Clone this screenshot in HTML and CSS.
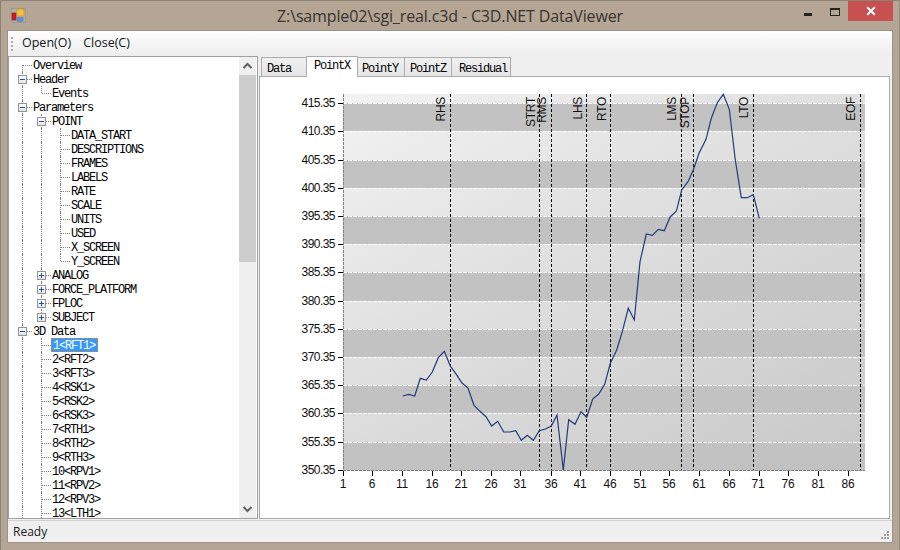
FILE: index.html
```html
<!DOCTYPE html>
<html lang="en">
<head>
<meta charset="utf-8">
<title>C3D.NET DataViewer</title>
<link rel="stylesheet" href="styles.css">
</head>
<body>
<div class="window">
  <header class="titlebar">
    <svg class="appicon" width="15" height="15" viewBox="0 0 15 15">
      <rect x="0.5" y="0.5" width="14" height="14" fill="#b9aca0" stroke="#a09a94"/>
      <rect x="1" y="5" width="4" height="7" fill="#c81e1e" stroke="#8a2020" stroke-width="0.6"/>
      <rect x="6" y="1" width="7" height="7" fill="#f0c040" stroke="#c09020" stroke-width="0.6"/>
      <rect x="6" y="9.5" width="6" height="4" fill="#5b8fd8" stroke="#6080b0" stroke-width="0.6"/>
    </svg>
    <div class="title">Z:\sample02\sgi_real.c3d - C3D.NET DataViewer</div>
    <div class="controls">
      <span class="btn"><i class="min"></i></span>
      <span class="btn"><i class="max"></i></span>
      <span class="close">
        <svg width="10" height="10" viewBox="0 0 10 10"><path d="M1.2 1.2 8.8 8.8M8.8 1.2 1.2 8.8" stroke="#fff" stroke-width="2"/></svg>
      </span>
    </div>
  </header>
  <div class="client">
    <nav class="toolbar">
      <span class="grip"></span>
      <span class="menu">Open(O)</span>
      <span class="menu">Close(C)</span>
    </nav>
    <main class="main">
      <section class="tree">
        <div class="nodes">
          <div class="row"><i class="cell start"></i><span class="label">Overview</span></div>
          <div class="row"><i class="cell tee"><b class="exp open"></b></i><span class="label">Header</span></div>
          <div class="row"><i class="cell v"></i><i class="cell corner"></i><span class="label">Events</span></div>
          <div class="row"><i class="cell tee"><b class="exp open"></b></i><span class="label">Parameters</span></div>
          <div class="row"><i class="cell v"></i><i class="cell tee"><b class="exp open"></b></i><span class="label">POINT</span></div>
          <div class="row"><i class="cell v"></i><i class="cell v"></i><i class="cell tee"></i><span class="label">DATA_START</span></div>
          <div class="row"><i class="cell v"></i><i class="cell v"></i><i class="cell tee"></i><span class="label">DESCRIPTIONS</span></div>
          <div class="row"><i class="cell v"></i><i class="cell v"></i><i class="cell tee"></i><span class="label">FRAMES</span></div>
          <div class="row"><i class="cell v"></i><i class="cell v"></i><i class="cell tee"></i><span class="label">LABELS</span></div>
          <div class="row"><i class="cell v"></i><i class="cell v"></i><i class="cell tee"></i><span class="label">RATE</span></div>
          <div class="row"><i class="cell v"></i><i class="cell v"></i><i class="cell tee"></i><span class="label">SCALE</span></div>
          <div class="row"><i class="cell v"></i><i class="cell v"></i><i class="cell tee"></i><span class="label">UNITS</span></div>
          <div class="row"><i class="cell v"></i><i class="cell v"></i><i class="cell tee"></i><span class="label">USED</span></div>
          <div class="row"><i class="cell v"></i><i class="cell v"></i><i class="cell tee"></i><span class="label">X_SCREEN</span></div>
          <div class="row"><i class="cell v"></i><i class="cell v"></i><i class="cell corner"></i><span class="label">Y_SCREEN</span></div>
          <div class="row"><i class="cell v"></i><i class="cell tee"><b class="exp"></b></i><span class="label">ANALOG</span></div>
          <div class="row"><i class="cell v"></i><i class="cell tee"><b class="exp"></b></i><span class="label">FORCE_PLATFORM</span></div>
          <div class="row"><i class="cell v"></i><i class="cell tee"><b class="exp"></b></i><span class="label">FPLOC</span></div>
          <div class="row"><i class="cell v"></i><i class="cell corner"><b class="exp"></b></i><span class="label">SUBJECT</span></div>
          <div class="row"><i class="cell tee"><b class="exp open"></b></i><span class="label">3D Data</span></div>
          <div class="row"><i class="cell v"></i><i class="cell tee"></i><span class="label selected">1&lt;RFT1&gt;</span></div>
          <div class="row"><i class="cell v"></i><i class="cell tee"></i><span class="label">2&lt;RFT2&gt;</span></div>
          <div class="row"><i class="cell v"></i><i class="cell tee"></i><span class="label">3&lt;RFT3&gt;</span></div>
          <div class="row"><i class="cell v"></i><i class="cell tee"></i><span class="label">4&lt;RSK1&gt;</span></div>
          <div class="row"><i class="cell v"></i><i class="cell tee"></i><span class="label">5&lt;RSK2&gt;</span></div>
          <div class="row"><i class="cell v"></i><i class="cell tee"></i><span class="label">6&lt;RSK3&gt;</span></div>
          <div class="row"><i class="cell v"></i><i class="cell tee"></i><span class="label">7&lt;RTH1&gt;</span></div>
          <div class="row"><i class="cell v"></i><i class="cell tee"></i><span class="label">8&lt;RTH2&gt;</span></div>
          <div class="row"><i class="cell v"></i><i class="cell tee"></i><span class="label">9&lt;RTH3&gt;</span></div>
          <div class="row"><i class="cell v"></i><i class="cell tee"></i><span class="label">10&lt;RPV1&gt;</span></div>
          <div class="row"><i class="cell v"></i><i class="cell tee"></i><span class="label">11&lt;RPV2&gt;</span></div>
          <div class="row"><i class="cell v"></i><i class="cell tee"></i><span class="label">12&lt;RPV3&gt;</span></div>
          <div class="row"><i class="cell v"></i><i class="cell tee"></i><span class="label">13&lt;LTH1&gt;</span></div>
        </div>
        <div class="scrollbar">
          <svg class="arrow" width="17" height="18" viewBox="0 0 17 18"><path d="M4.5 11 8.5 7 12.5 11" fill="none" stroke="#606060" stroke-width="2"/></svg>
          <div class="thumb"></div>
          <div class="track"></div>
          <svg class="arrow" width="17" height="18" viewBox="0 0 17 18"><path d="M4.5 7 8.5 11 12.5 7" fill="none" stroke="#606060" stroke-width="2"/></svg>
        </div>
      </section>
      <section class="tabs">
        <div class="tabstrip">
          <span class="tab tab-data">Data</span>
          <span class="tab active">PointX</span>
          <span class="tab tab-y">PointY</span>
          <span class="tab tab-z">PointZ</span>
          <span class="tab tab-r">Residual</span>
        </div>
        <div class="page">
          <svg class="chart" width="629" height="441" viewBox="260 77 629 441">
            <defs>
              <linearGradient id="plotbg" gradientUnits="userSpaceOnUse" x1="343" y1="94" x2="740" y2="782">
                <stop offset="0" stop-color="#f2f2f2"/>
                <stop offset="1" stop-color="#b8b8b8"/>
              </linearGradient>
            </defs>
            <rect x="343" y="94" width="522" height="377" fill="url(#plotbg)"/>
            <g class="band">
              <rect x="343" y="103" width="522" height="28"/>
              <rect x="343" y="160" width="522" height="28"/>
              <rect x="343" y="216" width="522" height="28"/>
              <rect x="343" y="272" width="522" height="29"/>
              <rect x="343" y="329" width="522" height="28"/>
              <rect x="343" y="385" width="522" height="28"/>
              <rect x="343" y="442" width="522" height="28"/>
            </g>
            <path class="grid" d="M343 103.5H865M343 131.5H865M343 160.5H865M343 188.5H865M343 216.5H865M343 244.5H865M343 272.5H865M343 301.5H865M343 329.5H865M343 357.5H865M343 385.5H865M343 413.5H865M343 442.5H865"/>
            <path class="axisline" d="M343.5 94V470.5H865"/>
            <path class="tick" d="M338 103.5H343M338 131.5H343M338 160.5H343M338 188.5H343M338 216.5H343M338 244.5H343M338 272.5H343M338 301.5H343M338 329.5H343M338 357.5H343M338 385.5H343M338 413.5H343M338 442.5H343M338 470.5H343"/>
            <path class="tick" d="M343.5 471V476M372.5 471V476M402.5 471V476M432.5 471V476M461.5 471V476M491.5 471V476M520.5 471V476M551.5 471V476M580.5 471V476M610.5 471V476M640.5 471V476M669.5 471V476M699.5 471V476M729.5 471V476M759.5 471V476M788.5 471V476M818.5 471V476M848.5 471V476"/>
            <path class="event" d="M450.5 94V470M539.5 94V470M551.5 94V470M586.5 94V470M610.5 94V470M681.5 94V470M693.5 94V470M753.5 94V470M860.5 94V470"/>
            <g class="ylabels">
              <text x="335" y="107">415.35</text><text x="335" y="135">410.35</text><text x="335" y="164">405.35</text><text x="335" y="192">400.35</text><text x="335" y="220">395.35</text><text x="335" y="248">390.35</text><text x="335" y="276">385.35</text><text x="335" y="305">380.35</text><text x="335" y="333">375.35</text><text x="335" y="361">370.35</text><text x="335" y="389">365.35</text><text x="335" y="417">360.35</text><text x="335" y="446">355.35</text><text x="335" y="474">350.35</text>
            </g>
            <g class="xlabels">
              <text x="343" y="488">1</text><text x="372" y="488">6</text><text x="402" y="488">11</text><text x="432" y="488">16</text><text x="461" y="488">21</text><text x="491" y="488">26</text><text x="520" y="488">31</text><text x="551" y="488">36</text><text x="580" y="488">41</text><text x="610" y="488">46</text><text x="640" y="488">51</text><text x="669" y="488">56</text><text x="699" y="488">61</text><text x="729" y="488">66</text><text x="758" y="488">71</text><text x="788" y="488">76</text><text x="818" y="488">81</text><text x="848" y="488">86</text>
            </g>
            <g class="elabels">
              <text transform="translate(445 97) rotate(-90)">RHS</text>
              <text transform="translate(535 97) rotate(-90)">STRT</text>
              <text transform="translate(546 97) rotate(-90)">RMS</text>
              <text transform="translate(582 97) rotate(-90)">LHS</text>
              <text transform="translate(606 97) rotate(-90)">RTO</text>
              <text transform="translate(676 97) rotate(-90)">LMS</text>
              <text transform="translate(689 97) rotate(-90)">STOP</text>
              <text transform="translate(748 97) rotate(-90)">LTO</text>
              <text transform="translate(855 97) rotate(-90)">EOF</text>
            </g>
            <polyline class="series" points="402.7,396 408.7,394.3 414.7,396 420.3,378.3 426.3,380 432.3,372 438.3,357.7 444.3,351.3 450.3,366 456.3,374.3 462,383 468,388 474,405.3 480,411.3 486,416.7 491.7,426 497.7,421.3 503.7,432 509.7,432 515.7,430.7 521.3,440.3 527.3,435.3 533.3,440.3 539.3,430.7 545.3,429 551.3,426 557,415 563.3,470 568.7,419.7 575,424.3 581,411.7 586.7,417.3 592.7,399 598.7,394 604.7,384.3 610.3,363.3 616.7,350 622.3,331.7 628.3,308.3 634.3,320 640,261.7 646.3,234 652.3,235.3 658.3,229.3 664.3,230.7 670.3,216.7 676.3,211.3 681.7,190 688,181.7 693.3,170 699,153.3 706,139.3 711.3,118.3 717.3,102.7 723.3,94.3 729.3,109.3 735.3,160 741.3,197.7 747.3,197.7 753.3,194.7 759.3,218.3"/>
          </svg>
        </div>
      </section>
    </main>
    <footer class="status">
      <span>Ready</span>
      <svg class="sizegrip" width="11" height="11" viewBox="0 0 11 11">
        <path d="M8 1h2v2H8zM5 4h2v2H5zM8 4h2v2H8zM2 7h2v2H2zM5 7h2v2H5zM8 7h2v2H8z" fill="#a0a0a0"/>
      </svg>
    </footer>
  </div>
</div>
</body>
</html>
```

FILE: styles.css
```css
* { box-sizing: border-box; }
html, body { margin: 0; padding: 0; }
body { width: 900px; height: 550px; overflow: hidden; }

.window {
  width: 900px;
  height: 550px;
  display: flex;
  flex-direction: column;
  background: #b5a594;
  border-top: 1px solid #8c8276;
  border-left: 1px solid #8c8276;
  border-right: 1px solid #9a8e80;
  padding: 0 7px 8px 7px;
}

.titlebar {
  height: 30px;
  flex: none;
  display: flex;
  align-items: flex-start;
  position: relative;
}
.appicon { margin: 7px 0 0 3px; flex: none; }
.title {
  position: absolute;
  left: 0;
  right: 0;
  top: 5px;
  text-align: center;
  font: 16px/20px "Open Sans", "Noto Sans", sans-serif;
  letter-spacing: -0.14px;
  color: #38332e;
}
.controls { margin-left: auto; display: flex; position: relative; margin-right: -1px; }
.btn { width: 26px; height: 20px; display: flex; justify-content: center; }
.min { width: 8px; height: 3px; background: #26221e; margin: 12px 0 0 6px; }
.max { width: 10px; height: 8px; border: 1px solid #26221e; border-top-width: 2px; margin: 7px 0 0 8px; }
.close {
  width: 45px;
  height: 20px;
  margin-left: 4px;
  background: #c75050;
  display: flex;
  align-items: center;
  justify-content: center;
}

.client {
  flex: 1;
  min-height: 0;
  display: flex;
  flex-direction: column;
  background: #f0f0f0;
  box-shadow: 0 0 0 1px #9c948a;
}

.toolbar {
  height: 25px;
  flex: none;
  display: flex;
  align-items: center;
  background: linear-gradient(#ffffff, #f6f6f6 40%, #eeeeee);
  font: 12.5px/16px "Open Sans", "Noto Sans", sans-serif;
  color: #101820;
  padding: 0 0 2px 3px;
}
.grip {
  width: 2px;
  height: 14px;
  margin-top: 2px;
  background: repeating-linear-gradient(#b0b0b0 0 2px, transparent 2px 4px);
  margin-right: 9px;
}
.menu { margin-right: 12px; }

.main { flex: 1; min-height: 0; display: flex; }

.tree {
  width: 250px;
  height: 463px;
  flex: none;
  display: flex;
  background: #fff;
  border: 1px solid #a0a0a0;
  overflow: hidden;
}
.nodes {
  flex: 1;
  min-width: 0;
  padding: 1px 0 0 4px;
  overflow: hidden;
  font: 12px/10px "Liberation Mono", "DejaVu Sans Mono", monospace;
  letter-spacing: -1.2px;
  color: #000;
}
.row { height: 14px; display: flex; white-space: pre; }
.cell { width: 19px; height: 14px; flex: none; position: relative; display: block; }
.v::before, .tee::before, .corner::before, .start::before {
  content: "";
  position: absolute;
  left: 9px;
  top: 0;
  bottom: 0;
  border-left: 1px dotted #808080;
}
.corner::before { bottom: 7px; }
.start::before { top: 7px; }
.tee::after, .corner::after, .start::after {
  content: "";
  position: absolute;
  left: 10px;
  top: 7px;
  width: 9px;
  border-top: 1px dotted #808080;
}
.exp {
  position: absolute;
  z-index: 1;
  left: 5px;
  top: 3px;
  width: 9px;
  height: 9px;
  border: 1px solid #959595;
  background: linear-gradient(#ffffff, #e4e4e4);
  display: block;
}
.exp::before {
  content: "";
  position: absolute;
  left: 1px;
  top: 3px;
  width: 5px;
  height: 1px;
  background: #2a4f9c;
}
.exp::after {
  content: "";
  position: absolute;
  left: 3px;
  top: 1px;
  width: 1px;
  height: 5px;
  background: #2a4f9c;
}
.exp.open::after { display: none; }
.label { padding: 3px 2px 0 1px; height: 14px; }
.selected { padding: 3px 3px 0 2px; background: #3399ff; color: #fff; outline: 1px dotted #e08020; outline-offset: -1px; }

.scrollbar {
  width: 17px;
  flex: none;
  display: flex;
  flex-direction: column;
  background: #f0f0f0;
  margin-right: 1px;
}
.arrow { flex: none; }
.thumb { height: 187px; flex: none; background: #cdcdcd; }
.track { flex: 1; }

.tabs { flex: 1; min-width: 0; display: flex; flex-direction: column; padding: 0 2px 0 1px; }
.tabstrip {
  height: 20px;
  flex: none;
  display: flex;
  align-items: flex-end;
  padding-left: 2px;
  font: 12px/14px "Liberation Mono", "DejaVu Sans Mono", monospace;
  letter-spacing: -1.2px;
  color: #000;
  position: relative;
  z-index: 1;
}
.tab {
  height: 19px;
  padding: 4px 0 0 6px;
  border: 1px solid #acacac;
  border-bottom: 0;
  background: linear-gradient(#f0f0f0, #e5e5e5);
}
.tab + .tab { margin-left: -1px; }
.tab-data { width: 46px; padding-left: 5px; }
.tab-y { width: 48px; padding-left: 4px; }
.tab-z { width: 48px; padding-left: 5px; }
.tab-r { width: 60px; padding-left: 7px; }
.tab.active {
  width: 52px;
  height: 21px;
  margin-bottom: -1px;
  background: #fff;
  padding: 2px 0 0 7px;
  z-index: 1;
}
.page {
  flex: 1;
  min-height: 0;
  background: #fff;
  border: 1px solid #acacac;
  overflow: hidden;
}
.chart { display: block; }
.band rect { fill: #c2c2c2; }
.grid { stroke: #fff; stroke-width: 1; stroke-dasharray: 4 1; opacity: 0.85; fill: none; }
.axisline { stroke: #808080; stroke-width: 1; stroke-dasharray: 3 1; fill: none; }
.tick { stroke: #000; stroke-width: 1; fill: none; }
.event { stroke: #000; stroke-width: 1; stroke-dasharray: 3 2; fill: none; }
.series { fill: none; stroke: #253a78; stroke-width: 1.2; }
.ylabels text, .xlabels text, .elabels text {
  font: 12px "Liberation Sans", Arial, sans-serif;
  fill: #101010;
}
.ylabels text { text-anchor: end; letter-spacing: -0.55px; }
.xlabels text { text-anchor: middle; letter-spacing: -0.2px; }
.elabels text { text-anchor: end; letter-spacing: -0.3px; }

.status {
  height: 22px;
  flex: none;
  display: flex;
  align-items: center;
  justify-content: space-between;
  padding: 1px 2px 0 5px;
  border-top: 1px solid #d0d0d0;
  margin-top: 1px;
  font: 12px/16px "Open Sans", "Noto Sans", sans-serif;
  color: #202020;
}
.sizegrip { align-self: flex-end; margin-bottom: 1px; }
```
